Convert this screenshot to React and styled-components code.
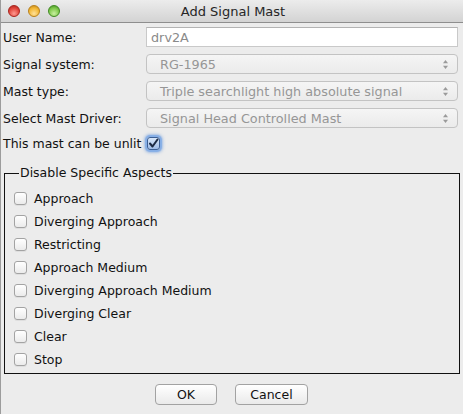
import React from 'react';
import styled, { createGlobalStyle } from 'styled-components';

const GlobalStyle = createGlobalStyle`
    html, body {
        margin: 0;
        padding: 0;
        background: #ececec;
    }
    body {
        font-family: "DejaVu Sans", "Liberation Sans", sans-serif;
        font-size: 12px;
        color: #151515;
    }
`;

const aspects = [
    'Approach',
    'Diverging Approach',
    'Restricting',
    'Approach Medium',
    'Diverging Approach Medium',
    'Diverging Clear',
    'Clear',
    'Stop',
];

const fields = [
    { label: 'User Name:', value: 'drv2A', kind: 'text' },
    { label: 'Signal system:', value: 'RG-1965', kind: 'combo' },
    { label: 'Mast type:', value: 'Triple searchlight high absolute signal', kind: 'combo' },
    { label: 'Select Mast Driver:', value: 'Signal Head Controlled Mast', kind: 'combo' },
];

function ComboArrows() {
    return (
        <svg width="7" height="11" viewBox="0 0 7 11">
            <path d="M3.5 1 L6 4.2 L1 4.2 Z" fill="#9a9a9a" />
            <path d="M3.5 10 L6 6.8 L1 6.8 Z" fill="#9a9a9a" />
        </svg>
    );
}

function CheckMark() {
    return (
        <svg width="11" height="11" viewBox="0 0 11 11">
            <path d="M2 5.5 L4.5 8.5 L9.5 1.5" fill="none" stroke="#1c2a44" strokeWidth="2" strokeLinecap="round" strokeLinejoin="round" />
        </svg>
    );
}

function App() {
    return (
        <>
            <GlobalStyle />
            <Window>
                <TitleBar>
                    <Lights>
                        <Light $color="red" />
                        <Light $color="yellow" />
                        <Light $color="green" />
                    </Lights>
                    <Title>Add Signal Mast</Title>
                </TitleBar>
                <Body>
                    <Form>
                        {fields.map((f) => (
                            <React.Fragment key={f.label}>
                                <Label>{f.label}</Label>
                                {f.kind === 'text' ? (
                                    <TextField>{f.value}</TextField>
                                ) : (
                                    <Combo>
                                        <span>{f.value}</span>
                                        <ComboArrows />
                                    </Combo>
                                )}
                            </React.Fragment>
                        ))}
                    </Form>
                    <UnlitRow>
                        <Label>This mast can be unlit</Label>
                        <FocusedCheck>
                            <CheckMark />
                        </FocusedCheck>
                    </UnlitRow>
                    <Aspects>
                        <Legend>Disable Specific Aspects</Legend>
                        {aspects.map((a) => (
                            <AspectRow key={a}>
                                <Box />
                                <span>{a}</span>
                            </AspectRow>
                        ))}
                    </Aspects>
                    <Buttons>
                        <Button $width={62}>OK</Button>
                        <Button $width={73}>Cancel</Button>
                    </Buttons>
                </Body>
            </Window>
        </>
    );
}

const lightColors = {
    red: ['#ff9a90', '#e0443a', '#a8231c'],
    yellow: ['#ffe19a', '#f2b632', '#b9801a'],
    green: ['#c8f0a0', '#7cc748', '#3f8a22'],
};

const Window = styled.div`
    width: 463px;
    height: 414px;
    box-sizing: border-box;
    border-left: 1px solid #9c9c9c;
    background: #ececec;
    display: flex;
    flex-direction: column;
    overflow: hidden;
`;

const TitleBar = styled.div`
    height: 22px;
    flex: none;
    position: relative;
    display: flex;
    align-items: center;
    justify-content: center;
    background: linear-gradient(#ececec, #d3d3d3);
    border-bottom: 1px solid #8e8e8e;
`;

const Lights = styled.div`
    position: absolute;
    left: 7px;
    top: 5px;
    display: flex;
    gap: 8px;
`;

const Light = styled.div`
    width: 12px;
    height: 12px;
    border-radius: 50%;
    box-sizing: border-box;
    border: 1px solid ${(p) => lightColors[p.$color][2]};
    background: radial-gradient(circle at 50% 75%, ${(p) => lightColors[p.$color][0]} 0%, ${(p) => lightColors[p.$color][1]} 60%, ${(p) => lightColors[p.$color][2]} 100%);
`;

const Title = styled.div`
    font-size: 13px;
    color: #262626;
    margin-left: 2px;
`;

const Body = styled.div`
    flex: 1;
    padding: 4px 3px 0 2px;
    display: flex;
    flex-direction: column;
`;

const Form = styled.div`
    display: grid;
    grid-template-columns: 143px 1fr;
    grid-auto-rows: 20px;
    row-gap: 7px;
    align-items: center;
`;

const Label = styled.div`
    font-size: 12.5px;
    white-space: nowrap;
    color: #111;
`;

const TextField = styled.div`
    height: 20px;
    margin-right: 2px;
    box-sizing: border-box;
    background: #fff;
    border: 1px solid #c9c9c9;
    border-top-color: #b3b3b3;
    padding: 0 4px;
    display: flex;
    align-items: center;
    font-size: 12.8px;
    color: #8a8a8a;
`;

const Combo = styled.div`
    height: 20px;
    margin-right: 2px;
    box-sizing: border-box;
    border: 1px solid #c3c3c3;
    border-radius: 4px;
    background: linear-gradient(#f5f5f5, #ebebeb);
    padding: 0 8px 0 13px;
    display: flex;
    align-items: center;
    justify-content: space-between;
    font-size: 12.8px;
    color: #969696;
`;

const UnlitRow = styled.div`
    margin-top: 6px;
    height: 18px;
    display: flex;
    align-items: center;
    gap: 6px;
`;

const FocusedCheck = styled.div`
    width: 13px;
    height: 13px;
    box-sizing: border-box;
    border: 1px solid #3b5f95;
    border-radius: 3px;
    background: linear-gradient(#d8e6f8, #9dbbe6);
    box-shadow: 0 0 1px 2px #86aee6, 0 0 3px 3px rgba(100, 150, 220, 0.5);
    display: flex;
    align-items: center;
    justify-content: center;
`;

const Aspects = styled.fieldset`
    margin: 14px 0 0 1px;
    padding: 7px 0 2px 9px;
    border: 1px solid #111;
    min-width: 0;
`;

const Legend = styled.legend`
    padding: 0 1px;
    margin-left: 5px;
    font-size: 12.5px;
    line-height: 14px;
    color: #111;
`;

const AspectRow = styled.div`
    height: 23px;
    display: flex;
    align-items: center;
    gap: 7px;
    font-size: 12.5px;
    color: #111;
`;

const Box = styled.div`
    width: 13px;
    height: 13px;
    box-sizing: border-box;
    border: 1px solid #a3a3a3;
    border-radius: 3px;
    background: linear-gradient(#ffffff, #ebebeb);
    box-shadow: 0 1px 0 rgba(0, 0, 0, 0.06);
`;

const Buttons = styled.div`
    margin-top: 10px;
    display: flex;
    justify-content: center;
    gap: 18px;
`;

const Button = styled.div`
    width: ${(p) => p.$width}px;
    height: 21px;
    box-sizing: border-box;
    border: 1px solid #a2a2a2;
    border-radius: 4px;
    background: linear-gradient(#ffffff, #eaeaea);
    display: flex;
    align-items: center;
    justify-content: center;
    font-size: 12.5px;
    color: #111;
`;

export default App;
